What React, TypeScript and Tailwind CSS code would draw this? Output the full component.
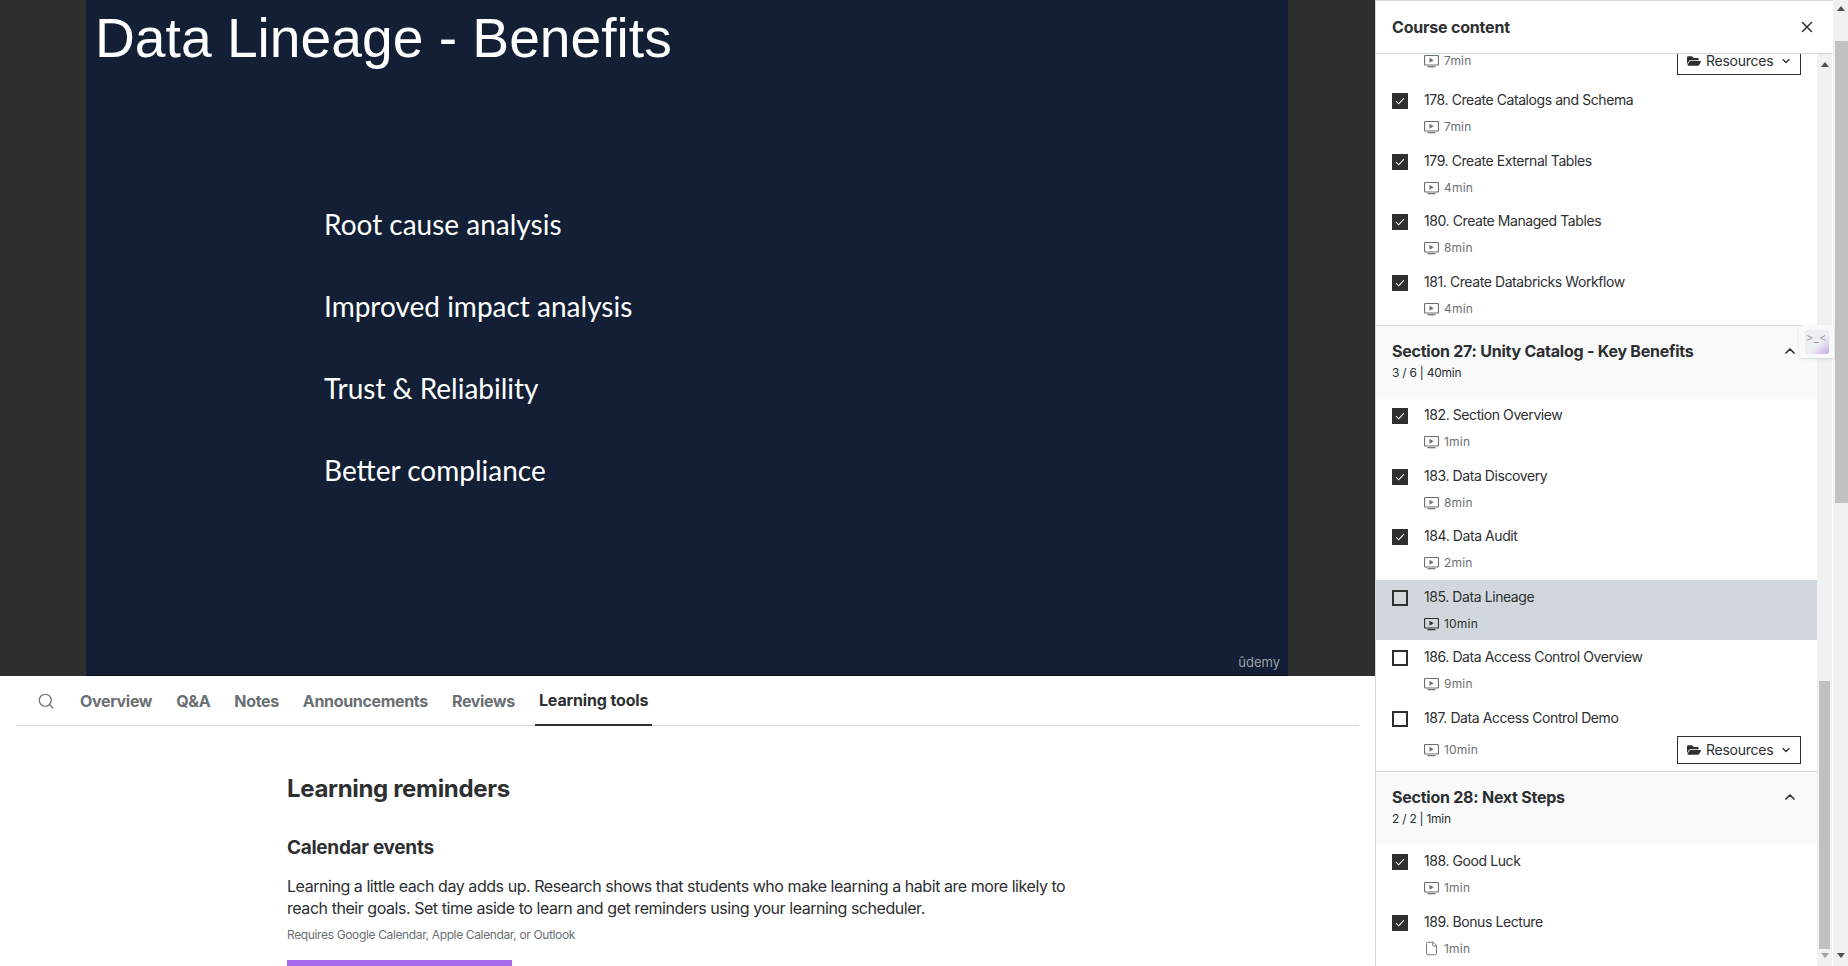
import { ChevronDown, ChevronUp, File, Search, X } from "lucide-react";
import { FaFolderOpen } from "react-icons/fa";

interface Lecture {
  title: string;
  mins: string;
  done: boolean;
  active?: boolean;
  article?: boolean;
  resources?: boolean;
}

const section26: Lecture[] = [
  { title: "178. Create Catalogs and Schema", mins: "7min", done: true },
  { title: "179. Create External Tables", mins: "4min", done: true },
  { title: "180. Create Managed Tables", mins: "8min", done: true },
  { title: "181. Create Databricks Workflow", mins: "4min", done: true },
];

const section27: Lecture[] = [
  { title: "182. Section Overview", mins: "1min", done: true },
  { title: "183. Data Discovery", mins: "8min", done: true },
  { title: "184. Data Audit", mins: "2min", done: true },
  { title: "185. Data Lineage", mins: "10min", done: false, active: true },
  { title: "186. Data Access Control Overview", mins: "9min", done: false },
  { title: "187. Data Access Control Demo", mins: "10min", done: false, resources: true },
];

const section28: Lecture[] = [
  { title: "188. Good Luck", mins: "1min", done: true },
  { title: "189. Bonus Lecture", mins: "1min", done: true, article: true },
];

const tabs = ["Overview", "Q&A", "Notes", "Announcements", "Reviews"];
const bullets = ["Root cause analysis", "Improved impact analysis", "Trust & Reliability", "Better compliance"];

function VideoIcon() {
  return (
    <svg width="15" height="14" viewBox="0 0 15 14" fill="none" className="shrink-0">
      <rect x="0.5" y="1.5" width="14" height="9.5" rx="1" stroke="currentColor" strokeWidth="1.2" />
      <path d="M5.5 3.8v5l4.2-2.5z" fill="currentColor" />
      <path d="M3.5 12.7h8" stroke="currentColor" strokeWidth="1.2" />
    </svg>
  );
}

function Checkbox({ done }: { done: boolean }) {
  if (!done) {
    return <div className="w-4 h-4 shrink-0 border-2 border-[#2d2f31]" />;
  }
  return (
    <div className="w-4 h-4 shrink-0 bg-[#2d2f31] flex items-center justify-center">
      <svg width="10" height="8" viewBox="0 0 10 8" fill="none">
        <path d="M1 4.2l2.7 2.6L9 1.2" stroke="white" strokeWidth="1.1" />
      </svg>
    </div>
  );
}

function MetaLine({ lecture }: { lecture: Lecture }) {
  return (
    <div
      className={`flex items-center gap-[5px] text-xs tracking-[0.2px] ${lecture.active ? "text-[#2d2f31]" : "text-[#6a6f73]"}`}
    >
      {lecture.article ? (
        <File className="w-[15px] h-[15px] shrink-0" strokeWidth={1.5} />
      ) : (
        <VideoIcon />
      )}
      <span>{lecture.mins}</span>
    </div>
  );
}

function ResourcesButton() {
  return (
    <div className="flex items-center h-7 w-[124px] shrink-0 border border-[#2d2f31] pl-[9px] text-sm text-[#2d2f31] bg-white">
      <FaFolderOpen className="w-[14px] h-[14px] mr-[5px]" />
      <span className="leading-3 tracking-[-0.25px]">Resources</span>
      <ChevronDown className="w-3 h-3 ml-[7px]" strokeWidth={2.5} />
    </div>
  );
}

function LectureRow({ lecture }: { lecture: Lecture }) {
  return (
    <div
      className={`flex pl-4 ${lecture.resources ? "h-[70.5px]" : "h-[60.5px]"} ${lecture.active ? "bg-[#d1d7dc]" : ""}`}
    >
      <div className="mt-[10px] mr-4">
        <Checkbox done={lecture.done} />
      </div>
      <div className="flex-1 pt-[7px]">
        <div className="h-5 text-sm leading-5 text-[#2d2f31] tracking-[-0.42px]">{lecture.title}</div>
        {lecture.resources ? (
          <div className="flex items-center justify-between mt-2 pr-4">
            <MetaLine lecture={lecture} />
            <ResourcesButton />
          </div>
        ) : (
          <div className="flex items-center h-5 mt-[7px]">
            <MetaLine lecture={lecture} />
          </div>
        )}
      </div>
    </div>
  );
}

function SectionHead({ title, sub }: { title: string; sub: string }) {
  return (
    <div className="h-[73px] bg-[#f7f9fa] border-t border-[#d1d7dc] pl-4 pr-4 pt-[15px] flex justify-between">
      <div>
        <div className="h-5 text-base leading-5 font-bold text-[#2d2f31] tracking-[-0.24px]">{title}</div>
        <div className="h-5 mt-[2px] text-xs leading-5 text-[#2d2f31] tracking-[-0.25px]">{sub}</div>
      </div>
      <ChevronUp className="w-4 h-4 mt-[2px] mr-[3px] text-[#2d2f31]" strokeWidth={2.5} />
    </div>
  );
}

function Scrollbar({ children, className }: { children: React.ReactNode; className: string }) {
  return <div className={`shrink-0 bg-[#f1f1f1] flex flex-col items-center ${className}`}>{children}</div>;
}

function ArrowUp({ color }: { color: string }) {
  return (
    <svg width="8" height="5" viewBox="0 0 8 5" className={color}>
      <path d="M4 0l4 5H0z" fill="currentColor" />
    </svg>
  );
}

function ArrowDown({ color }: { color: string }) {
  return (
    <svg width="8" height="5" viewBox="0 0 8 5" className={color}>
      <path d="M4 5l4-5H0z" fill="currentColor" />
    </svg>
  );
}

export default function App() {
  return (
    <div className="flex h-[966px] w-[1848px] overflow-hidden bg-white text-[#2d2f31] [font-family:Inter,sans-serif]">
      <div className="w-[1375px] shrink-0 overflow-hidden">
        {/* Video */}
        <div className="h-[676px] bg-[#2e2e2e] pl-[86px]">
          <div className="relative w-[1202px] h-full bg-[#121f35] border-b border-[#0a0f1a] text-white">
            <div className="pl-[9px] pt-[3px] text-[55.2px] leading-[70px] [font-family:'Liberation_Sans',sans-serif]">
              Data Lineage - Benefits
            </div>
            <div className="pl-[238px] pt-[131px] flex flex-col gap-[42px] text-[28px] leading-10 [font-family:Lato,sans-serif]">
              {bullets.map((b) => (
                <div key={b}>{b}</div>
              ))}
            </div>
            <div className="absolute right-2 bottom-[5px] text-[13px] leading-4 text-[#9aa0a8]">ûdemy</div>
          </div>
        </div>

        {/* Tabs */}
        <div className="mx-4 h-[50px] border-b border-[#d1d7dc] flex items-center text-base font-bold text-[#6a6f73] tracking-[-0.33px]">
          <Search className="w-[18px] h-[18px] ml-[21px] mr-[25px]" strokeWidth={1.6} />
          <div className="flex gap-6 h-full items-center">
            {tabs.map((t) => (
              <span key={t}>{t}</span>
            ))}
            <span className="-ml-1 h-[50px] px-1 flex items-center text-[#2d2f31] border-b-2 border-[#2d2f31] tracking-[-0.15px]">
              Learning tools
            </span>
          </div>
        </div>

        {/* Learning reminders */}
        <div className="pl-[287px] w-[1090px]">
          <h2 className="mt-[46px] text-2xl leading-[34px] font-bold tracking-[-0.33px]">Learning reminders</h2>
          <h3 className="mt-[30px] text-[19px] leading-6 font-bold tracking-[-0.3px]">Calendar events</h3>
          <p className="mt-[15px] text-base leading-[22px] tracking-[-0.45px]">
            Learning a little each day adds up. Research shows that students who make learning a habit are more likely to
            <br />
            reach their goals. Set time aside to learn and get reminders using your learning scheduler.
          </p>
          <p className="mt-[6px] text-xs leading-5 text-[#6a6f73] tracking-[-0.36px]">
            Requires Google Calendar, Apple Calendar, or Outlook
          </p>
          <div className="mt-[15px] w-[225px] h-12 bg-[#a66bec]" />
        </div>
      </div>

      {/* Course content sidebar */}
      <div className="relative w-[458px] shrink-0 h-full flex flex-col border-l border-[#d1d7dc] bg-white">
        <div className="h-[54px] shrink-0 border-t border-b border-[#d1d7dc] flex items-center justify-between pl-4 pr-[17px]">
          <span className="text-base font-bold tracking-[-0.2px]">Course content</span>
          <X className="w-[18px] h-[18px]" strokeWidth={2} />
        </div>
        <div className="flex-1 min-h-0 flex overflow-hidden">
          <div className="flex-1 min-w-0 overflow-hidden">
            <div className="h-[29px] pl-[48px] pr-4 pb-2 flex items-end justify-between overflow-hidden">
              <div className="h-[22px] flex items-center mb-[3px]">
                <MetaLine lecture={{ title: "", mins: "7min", done: true }} />
              </div>
              <ResourcesButton />
            </div>
            {section26.map((l) => (
              <LectureRow key={l.title} lecture={l} />
            ))}
            <SectionHead title="Section 27: Unity Catalog - Key Benefits" sub="3 / 6 | 40min" />
            {section27.map((l) => (
              <LectureRow key={l.title} lecture={l} />
            ))}
            <SectionHead title="Section 28: Next Steps" sub="2 / 2 | 1min" />
            {section28.map((l) => (
              <LectureRow key={l.title} lecture={l} />
            ))}
          </div>
          <Scrollbar className="w-4 h-full pt-2 border-r border-white">
            <ArrowUp color="text-[#505050]" />
            <div className="w-[11px] h-[268px] mt-[614px] bg-[#c1c1c1]" />
            <div className="mt-[4px]">
              <ArrowDown color="text-[#a3a3a3]" />
            </div>
          </Scrollbar>
        </div>

        {/* Floating helper */}
        <div className="absolute left-[423px] top-[325px] w-[35px] h-[33px] bg-[#f7f9fa] rounded-l shadow-sm flex items-center justify-center">
          <div className="w-6 h-6 rounded-[3px] bg-gradient-to-br from-[#eceef3] from-60% to-[#c9a5ea] flex items-start justify-center pt-[2px] text-[11px] leading-3 tracking-[0.5px] text-[#9a9ca3]">
            &gt;_&lt;
          </div>
        </div>
      </div>

      {/* Page scrollbar */}
      <Scrollbar className="w-[15px] h-full pt-[6px]">
        <ArrowUp color="text-[#505050]" />
        <div className="w-[13px] ml-[2px] h-[462px] mt-[30px] bg-[#c1c1c1]" />
        <div className="mt-[450px]">
          <ArrowDown color="text-[#505050]" />
        </div>
      </Scrollbar>
    </div>
  );
}
